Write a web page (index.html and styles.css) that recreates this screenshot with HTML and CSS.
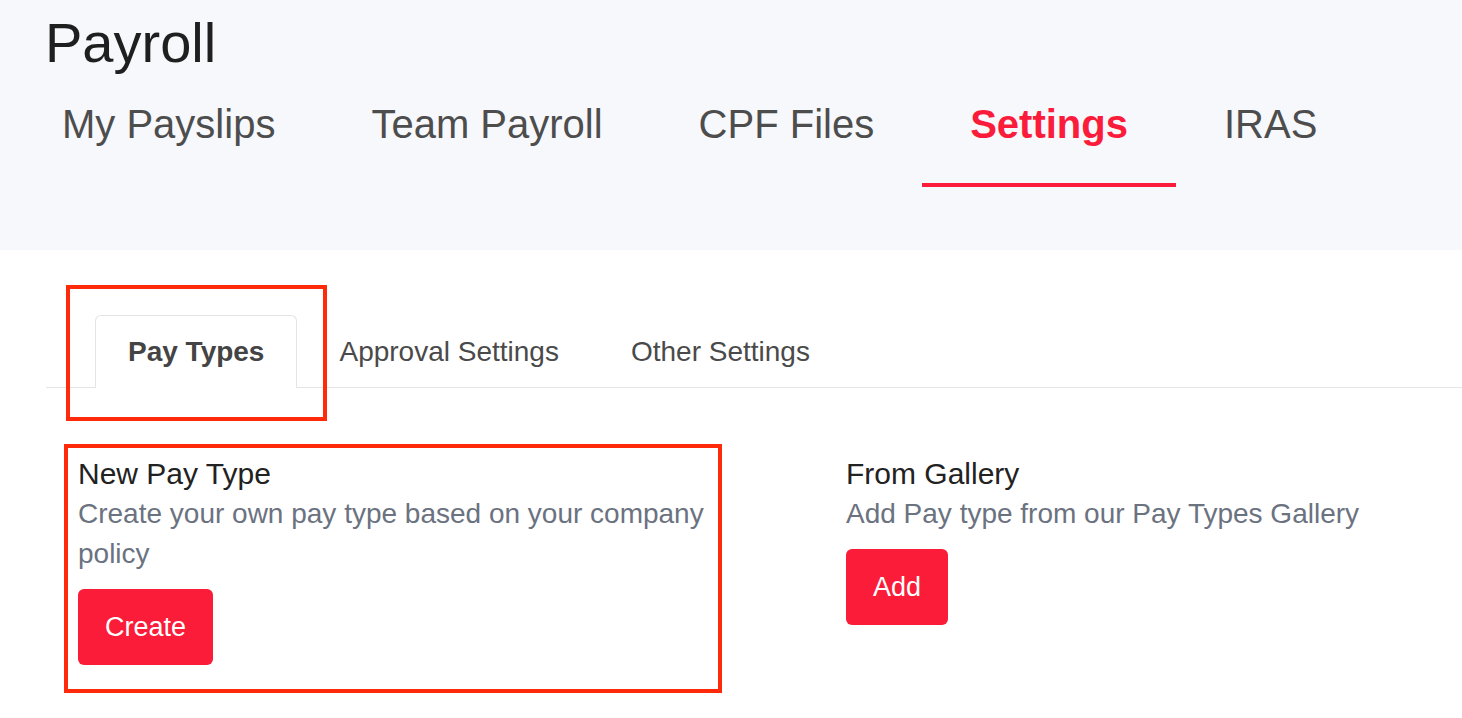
FILE: index.html
```html
<!DOCTYPE html>
<html lang="en">
<head>
<meta charset="utf-8">
<title>Payroll</title>
<link rel="stylesheet" href="styles.css">
</head>
<body>
  <header class="page-header">
    <h1 class="page-title">Payroll</h1>
    <nav class="main-nav">
      <a class="main-nav__item">My Payslips</a>
      <a class="main-nav__item">Team Payroll</a>
      <a class="main-nav__item">CPF Files</a>
      <a class="main-nav__item main-nav__item--active">Settings</a>
      <a class="main-nav__item">IRAS</a>
    </nav>
  </header>

  <main class="settings">
    <ul class="subtabs">
      <li class="subtab subtab--active">Pay Types</li>
      <li class="subtab">Approval Settings</li>
      <li class="subtab">Other Settings</li>
    </ul>

    <div class="options">
      <section class="option option--first">
        <h2 class="option__title">New Pay Type</h2>
        <p class="option__desc">Create your own pay type based on your company policy</p>
        <button class="btn">Create</button>
      </section>
      <section class="option">
        <h2 class="option__title">From Gallery</h2>
        <p class="option__desc">Add Pay type from our Pay Types Gallery</p>
        <button class="btn">Add</button>
      </section>
    </div>
  </main>

  <div class="highlight highlight--tab"></div>
  <div class="highlight highlight--card"></div>
</body>
</html>
```

FILE: styles.css
```css
* {
  box-sizing: border-box;
}

html, body {
  margin: 0;
  padding: 0;
  background: #ffffff;
  font-family: "Liberation Sans", Arial, Helvetica, sans-serif;
}

body {
  position: relative;
  width: 1462px;
  height: 718px;
  overflow: hidden;
}

/* Header */
.page-header {
  background: #f7f8fc;
  padding: 11px 0 63px 0;
}

.page-title {
  margin: 0 0 0 45px;
  font-size: 56px;
  font-weight: 400;
  line-height: 64px;
  color: #1f1f1f;
}

.main-nav {
  display: flex;
  margin: 25px 0 0 14px;
}

.main-nav__item {
  display: block;
  padding: 0 48px 35px 48px;
  font-size: 40px;
  line-height: 48px;
  color: #4d4d4d;
  border-bottom: 4px solid transparent;
  white-space: nowrap;
}

.main-nav__item--active {
  color: #fa1c3a;
  font-weight: 700;
  border-bottom-color: #fa1c3a;
}

/* Settings body */
.settings {
  padding: 65px 0 0 46px;
}

.subtabs {
  display: flex;
  gap: 5px;
  margin: 0;
  padding: 0 0 0 49px;
  list-style: none;
  border-bottom: 1px solid #e4e4e9;
}

.subtab {
  padding: 20px 29px 20px 36px;
  margin-bottom: -1px;
  font-size: 28px;
  line-height: 32px;
  color: #4a4a4a;
  border: 1px solid transparent;
  border-bottom: none;
  white-space: nowrap;
}

.subtab--active {
  padding: 20px 32px;
  font-weight: 700;
  color: #444444;
  background: #ffffff;
  border-color: #e3e3e8;
  border-radius: 6px 6px 0 0;
}

.options {
  display: grid;
  grid-template-columns: 768px 1fr;
  margin-left: 32px;
  padding-top: 67px;
}

.option--first {
  padding-right: 80px;
}

.option__title {
  margin: 0;
  font-size: 30px;
  font-weight: 400;
  line-height: 37px;
  color: #222222;
}

.option__desc {
  margin: 0;
  padding-top: 2px;
  font-size: 28px;
  line-height: 40px;
  color: #6b7280;
}

.btn {
  display: inline-flex;
  align-items: center;
  justify-content: center;
  height: 76px;
  margin-top: 15px;
  padding: 0 27px;
  border: none;
  border-radius: 6px;
  background: #fa1c38;
  color: #ffffff;
  font-family: "Liberation Sans", Arial, Helvetica, sans-serif;
  font-size: 27px;
}

/* Annotation overlays */
.highlight {
  position: absolute;
  border: 4px solid #fe2a0a;
  pointer-events: none;
}

.highlight--tab {
  left: 66px;
  top: 285px;
  width: 261px;
  height: 136px;
}

.highlight--card {
  left: 64px;
  top: 444px;
  width: 658px;
  height: 249px;
}
```
